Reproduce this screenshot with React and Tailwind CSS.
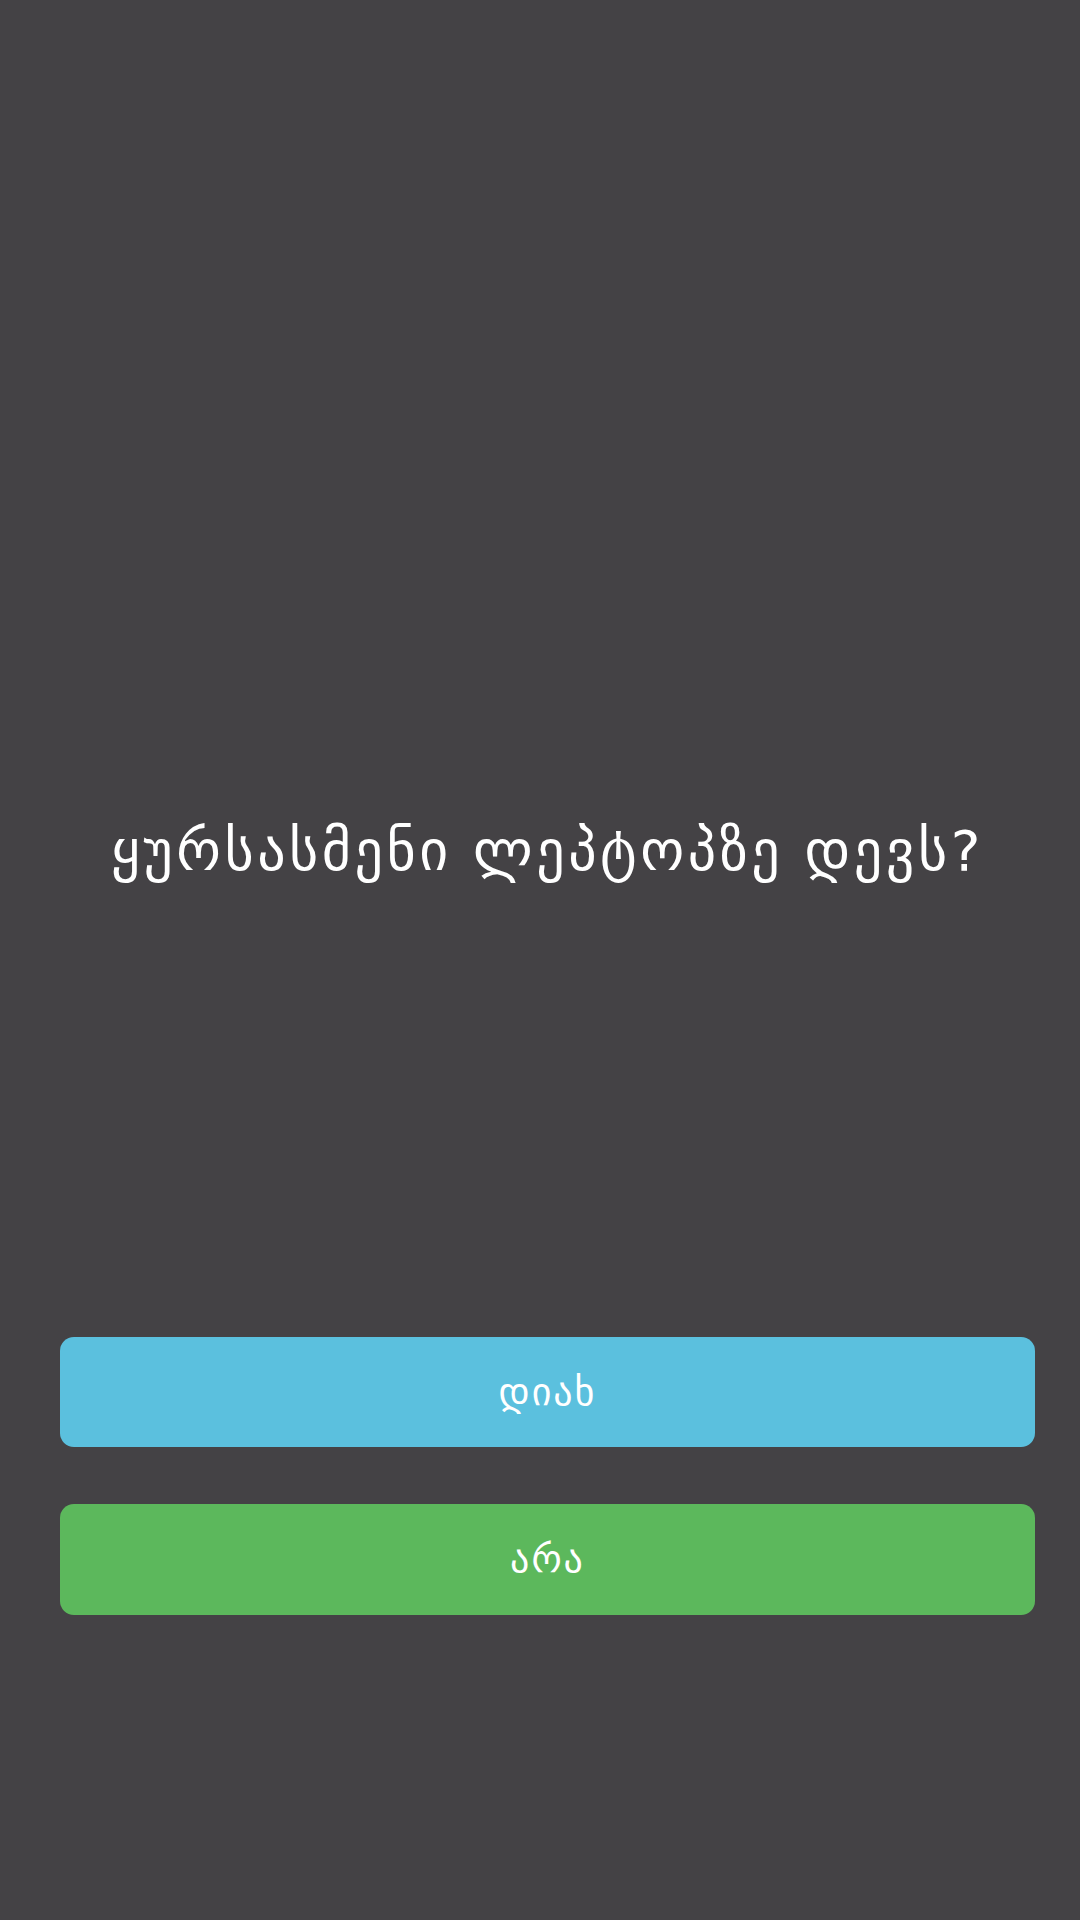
import React from 'react';

const App = () => {
  return (
    <div className="w-[1080px] h-[1920px] bg-[#444245] flex flex-col pl-[60px] pr-[45px] font-['DejaVu_Sans','Noto_Sans',sans-serif]">
      <div className="pt-[818px] w-full text-center text-white text-[56px] leading-[66px] tracking-[3.5px]">
        ყურსასმენი ლეპტოპზე დევს?
      </div>
      <div className="mt-[453px] w-full flex flex-col gap-[57px]">
        <button className="h-[110px] w-full rounded-[14px] bg-[#5bc0de] text-white text-[38px] tracking-[2px]">
          დიახ
        </button>
        <button className="h-[111px] w-full rounded-[14px] bg-[#5cb85c] text-white text-[38px] tracking-[2px]">
          არა
        </button>
      </div>
    </div>
  );
};

export default App;
